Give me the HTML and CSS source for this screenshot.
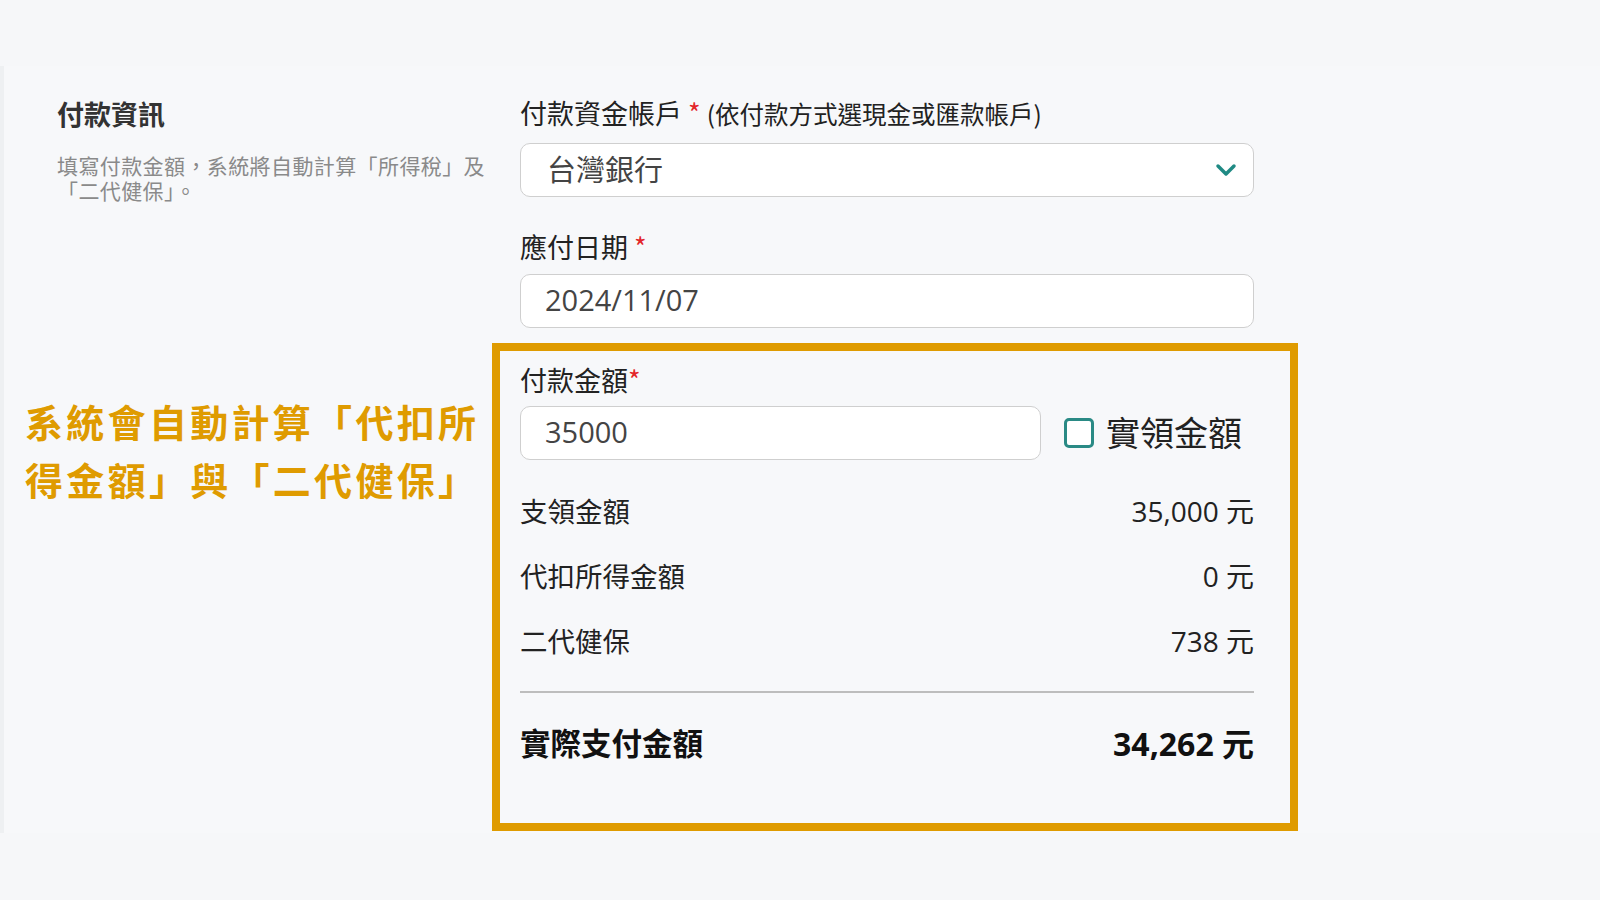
FILE: index.html
```html
<!DOCTYPE html>
<html lang="zh-Hant">
<head>
<meta charset="utf-8">
<title>付款資訊</title>
<link rel="stylesheet" href="styles.css">
</head>
<body>
<div class="page">
  <div class="card">
    <section class="intro">
      <h2 class="title">付款資訊</h2>
      <p class="desc">填寫付款金額，系統將自動計算「所得稅」及「二代健保」。</p>
      <p class="note">系統會自動計算「代扣所得金額」與「二代健保」</p>
    </section>
    <section class="form">
      <div class="field">
        <div class="label">付款資金帳戶 <span class="req">*</span> <span class="hint">(依付款方式選現金或匯款帳戶)</span></div>
        <div class="select">
          <span>台灣銀行</span>
          <svg class="chevron" width="22" height="14" viewBox="0 0 22 14"><path d="M3 3 L11 11 L19 3" fill="none" stroke="#1f8a84" stroke-width="3.5" stroke-linecap="round" stroke-linejoin="round"/></svg>
        </div>
      </div>
      <div class="field field-date">
        <div class="label">應付日期 <span class="req">*</span></div>
        <div class="input">2024/11/07</div>
      </div>
      <div class="highlight">
        <div class="label label-amount">付款金額<span class="req">*</span></div>
        <div class="amount-row">
          <div class="input amount">35000</div>
          <span class="check"></span>
          <span class="check-label">實領金額</span>
        </div>
        <div class="rows">
          <div class="row"><span class="name">支領金額</span><span class="val">35,000 元</span></div>
          <div class="row"><span class="name">代扣所得金額</span><span class="val">0 元</span></div>
          <div class="row"><span class="name">二代健保</span><span class="val">738 元</span></div>
        </div>
        <div class="divider"></div>
        <div class="row total"><span class="name">實際支付金額</span><span class="val">34,262 元</span></div>
      </div>
    </section>
  </div>
</div>
</body>
</html>
```
FILE: styles.css
```css
* { box-sizing: border-box; }
html, body { margin: 0; padding: 0; }
body {
  background: #f6f7f9;
  font-family: "Open Sans", "Noto Sans CJK TC", sans-serif;
  color: #222;
  width: 1600px;
  height: 900px;
  overflow: hidden;
}
.page { padding-top: 66px; }
.card {
  height: 767px;
  background: #f7f8fa;
  border-left: 4px solid #eef0f2;
  display: flex;
  padding-top: 30px;
}
.intro {
  flex: 0 0 516px;
  padding-left: 53px;
}
.title {
  margin: 0;
  font-size: 27px;
  line-height: 36px;
  font-weight: 700;
  color: #333;
  font-family: "Noto Sans CJK TC", sans-serif;
}
.desc {
  margin: 21px 0 0;
  width: 440px;
  font-size: 21px;
  line-height: 24.5px;
  letter-spacing: 0.4px;
  color: #8a8a8a;
  font-family: "Noto Sans CJK TC", sans-serif;
}
.note {
  margin: 190px 0 0 -32px;
  width: 480px;
  font-size: 38px;
  line-height: 58px;
  letter-spacing: 3.3px;
  font-weight: 700;
  color: #df9b00;
  font-family: "Noto Sans CJK TC", sans-serif;
}
.form {
  flex: 0 0 734px;
}
.label {
  font-size: 27px;
  line-height: 34px;
  color: #222;
  font-family: "Noto Sans CJK TC", sans-serif;
}
.req { color: #e3262a; }
.hint { font-size: 24.5px; }
.select, .input {
  height: 54px;
  background: #fff;
  border: 1.5px solid #cfcfcf;
  border-radius: 10px;
  font-size: 29px;
  color: #444;
  display: flex;
  align-items: center;
  padding-bottom: 4px;
}
.select {
  margin-top: 12px;
  padding-left: 26px;
  padding-right: 16px;
  justify-content: space-between;
}
.select .chevron { margin-top: 4px; }
.field-date { margin-top: 33px; }
.input {
  margin-top: 10px;
  padding-left: 24px;
}
.highlight {
  margin: 15px -44px 0 -28px;
  border: 8px solid #df9b00;
  padding: 12px 36px 56px 20px;
}
.amount-row {
  margin-top: 9px;
  display: flex;
  align-items: center;
}
.amount-row .input.amount {
  margin-top: 0;
  width: 521px;
}
.check {
  width: 30px;
  height: 30px;
  margin-left: 23px;
  border: 3px solid #2a8a85;
  border-radius: 5px;
  background: #fff;
}
.check-label {
  margin-left: 12px;
  font-size: 34px;
  line-height: 40px;
  color: #222;
  font-family: "Noto Sans CJK TC", sans-serif;
  position: relative;
  top: -1px;
}
.rows { margin-top: 17px; }
.row {
  height: 65px;
  display: flex;
  align-items: center;
  justify-content: space-between;
  font-size: 28px;
  color: #222;
}
.row .name { font-size: 27.5px; }
.row .val { white-space: pre; }
.divider {
  margin-top: 19px;
  height: 2px;
  background: #bdbdbd;
}
.row.total {
  margin-top: 24px;
  height: 50px;
  font-size: 32px;
  font-weight: 700;
  color: #111;
}
.row.total .name { font-size: 30.5px; }
```
